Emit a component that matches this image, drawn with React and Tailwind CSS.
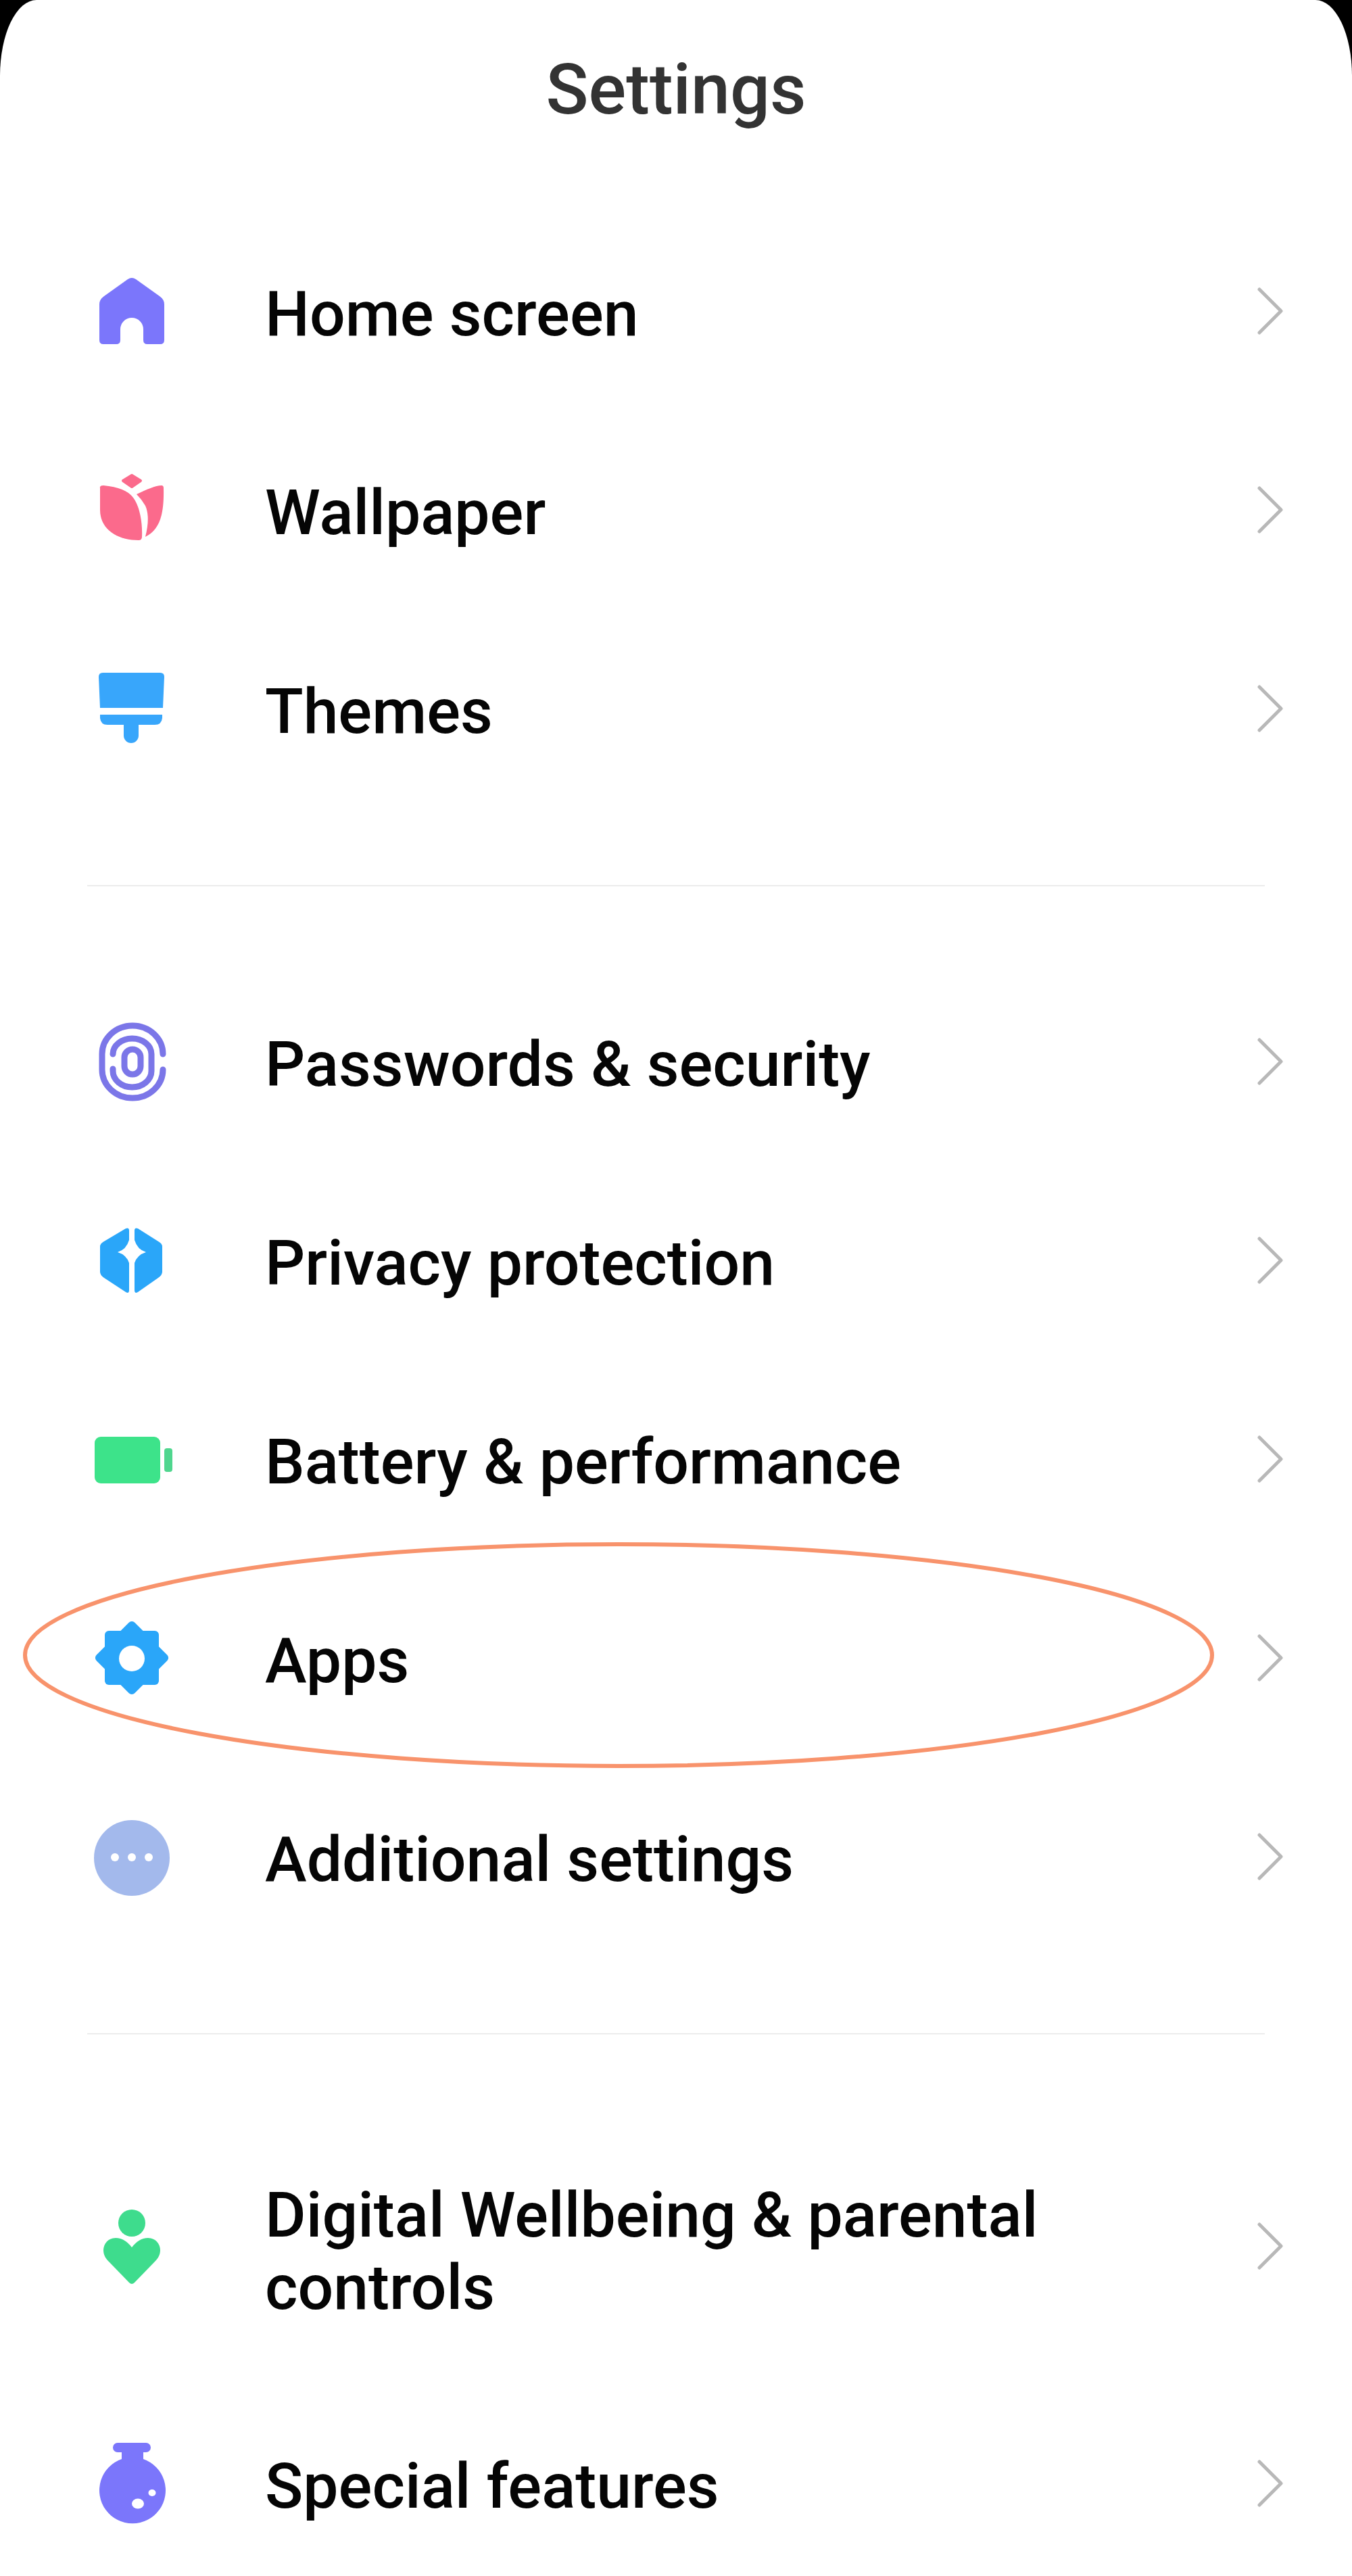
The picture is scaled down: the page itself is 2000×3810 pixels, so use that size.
import React from "react";

const HomeIcon = () => (
    <svg viewBox="0 0 120 120" className="w-[120px] h-[120px]">
        <path
            fill="#7b76fb"
            d="M54 13 Q60 9 66 13 L101 38 Q108 43 108 50 L108 103 Q108 109 102 109 L83 109 Q77 109 77 103 L77 87 A17 17 0 0 0 43 87 L43 103 Q43 109 37 109 L18 109 Q12 109 12 103 L12 50 Q12 43 19 38 Z"
        />
    </svg>
);

const TulipIcon = () => (
    <svg viewBox="0 0 120 120" className="w-[120px] h-[120px]">
        <g fill="#fb6a8c">
            <path d="M60 9 L73 17 L60 26 L47 17 Z" stroke="#fb6a8c" strokeWidth="4" strokeLinejoin="round" />
            <path d="M13 28 Q12 24 18 24 C40 26 55 32 62 42 C72 55 76 80 75 100 Q75 105 70 105 C40 105 13 90 13 60 Z" />
            <path d="M67 37 C82 30 95 24 104 24 Q107 24 107 28 C108 70 100 90 80 100 C85 80 85 65 80 54 Q75 45 67 37 Z" />
        </g>
    </svg>
);

const BrushIcon = () => (
    <svg viewBox="0 0 120 120" className="w-[120px] h-[120px]">
        <g fill="#38a6fb">
            <path d="M17 7 L102 7 Q108 7 108 13 L106 59 L13 59 L11 13 Q11 7 17 7 Z" />
            <path d="M13 69 L105 69 L105 74 Q104 84 94 84 L70 84 L70 100 A11 11 0 0 1 48 100 L48 84 L24 84 Q14 84 13 74 Z" />
        </g>
    </svg>
);

const FingerprintIcon = () => (
    <svg viewBox="0 0 120 120" className="w-[120px] h-[120px]">
        <g fill="none" stroke="#7b76e8" strokeWidth="9" strokeLinecap="round">
            <path d="M106 49 A45 42 0 0 0 16 49 V72 A45 42 0 0 0 106 72" />
            <path d="M32 49 A28.5 23 0 0 1 89 49 V74 A28.5 24 0 0 1 32 74 V71" />
            <rect x="49" y="42" width="24" height="37" rx="12" />
        </g>
    </svg>
);

const ShieldIcon = () => (
    <svg viewBox="0 0 120 120" className="w-[120px] h-[120px]">
        <g fill="#2aa6f9">
            <path d="M51 13 Q56 11 56 16 L56 30 Q52 44 39 48 Q52 52 56 64 L56 104 Q56 110 51 107 L19 86 Q13 82 13 77 L13 40 Q13 35 19 32 Z" />
            <path d="M69 13 Q64 11 64 16 L64 30 Q68 44 81 48 Q68 52 64 64 L64 104 Q64 110 69 107 L99 86 Q105 82 105 77 L105 40 Q105 35 99 32 Z" />
        </g>
    </svg>
);

const BatteryIcon = () => (
    <svg viewBox="0 0 120 120" className="w-[120px] h-[120px]">
        <rect x="5" y="27" width="97" height="69" rx="9" fill="#3de38a" />
        <rect x="108" y="44" width="12" height="35" rx="4" fill="#4fd68e" />
    </svg>
);

const GearIcon = () => (
    <svg viewBox="0 0 120 120" className="w-[120px] h-[120px]">
        <g fill="#2aa6f9">
            <rect x="20" y="20" width="80" height="80" rx="6" />
            <rect x="20" y="20" width="80" height="80" rx="6" transform="rotate(45 60 60)" />
        </g>
        <circle cx="60" cy="61" r="19" fill="#ffffff" />
    </svg>
);

const MoreIcon = () => (
    <svg viewBox="0 0 120 120" className="w-[120px] h-[120px]">
        <circle cx="60" cy="62" r="56" fill="#a3b9ec" />
        <circle cx="35" cy="61" r="6" fill="#ffffff" />
        <circle cx="60" cy="61" r="6" fill="#ffffff" />
        <circle cx="85" cy="61" r="6" fill="#ffffff" />
    </svg>
);

const HeartIcon = () => (
    <svg viewBox="0 0 120 120" className="w-[120px] h-[120px]">
        <g fill="#3edc8d">
            <circle cx="60" cy="22" r="20" />
            <path d="M60 58 C66 50 74 44 84 44 C96 44 102 54 102 62 C102 70 98 75 94 79 L64 110 Q60 114 56 110 L26 79 C22 75 18 70 18 62 C18 54 24 44 36 44 C46 44 54 50 60 58 Z" />
        </g>
    </svg>
);

const FlaskIcon = () => (
    <svg viewBox="0 0 120 120" className="w-[120px] h-[120px]">
        <path
            fill="#7b76fb"
            d="M39 0 L81 0 A7 7 0 0 1 81 14 L77 14 L77 24 A49 49 0 1 1 45 24 L45 14 L39 14 A7 7 0 0 1 39 0 Z"
        />
        <ellipse cx="69" cy="90" rx="9" ry="7.5" fill="#ffffff" />
        <ellipse cx="90" cy="74" rx="5.5" ry="5" fill="#ffffff" />
    </svg>
);

const Chevron = ({ className }) => (
    <svg viewBox="0 0 40 70" className={`w-[40px] h-[70px] shrink-0 ml-auto ${className}`}>
        <path d="M3 3 L35 35 L3 67" fill="none" stroke="#b8b8b8" strokeWidth="5" strokeLinecap="round" strokeLinejoin="round" />
    </svg>
);

const Row = ({ icon: Icon, label, tall }) => (
    <div className={`flex items-center pl-[135px] pr-[100px] ${tall ? "h-[400px]" : "h-[294px]"}`}>
        <Icon />
        <span className="ml-[137px] pt-[8px] w-[1200px] text-[93px] leading-[107px] font-medium text-[#050505]">{label}</span>
        <Chevron className={tall ? "-mt-[8px]" : ""} />
    </div>
);

const Divider = () => <div className="mx-[129px] h-[2px] bg-[#ececec]"></div>;

const App = () => {
    return (
        <div className="bg-black" style={{ fontFamily: "Roboto, sans-serif" }}>
            <div className="relative h-[3810px] overflow-hidden bg-white rounded-t-[54px_112px]">
                <div className="h-[266px] flex items-center justify-center text-[104px] font-medium text-[#333333]">Settings</div>
                <div className="h-[47px]"></div>

                <Row icon={HomeIcon} label="Home screen" />
                <Row icon={TulipIcon} label="Wallpaper" />
                <Row icon={BrushIcon} label="Themes" />

                <div className="h-[114px]"></div>
                <Divider />
                <div className="h-[112px]"></div>

                <Row icon={FingerprintIcon} label="Passwords & security" />
                <Row icon={ShieldIcon} label="Privacy protection" />
                <Row icon={BatteryIcon} label="Battery & performance" />
                <Row icon={GearIcon} label="Apps" />
                <Row icon={MoreIcon} label="Additional settings" />

                <div className="h-[114px]"></div>
                <Divider />
                <div className="h-[117px]"></div>

                <Row icon={HeartIcon} label="Digital Wellbeing & parental controls" tall />
                <Row icon={FlaskIcon} label="Special features" />

                {/* hand-drawn highlight round the Apps row */}
                <svg viewBox="0 0 1800 340" className="absolute left-[30px] top-[2278px] w-[1800px] h-[340px]">
                    <ellipse cx="885" cy="170" rx="878" ry="164" fill="none" stroke="#f8936c" strokeWidth="6" />
                </svg>
            </div>
        </div>
    );
};

export default App;
